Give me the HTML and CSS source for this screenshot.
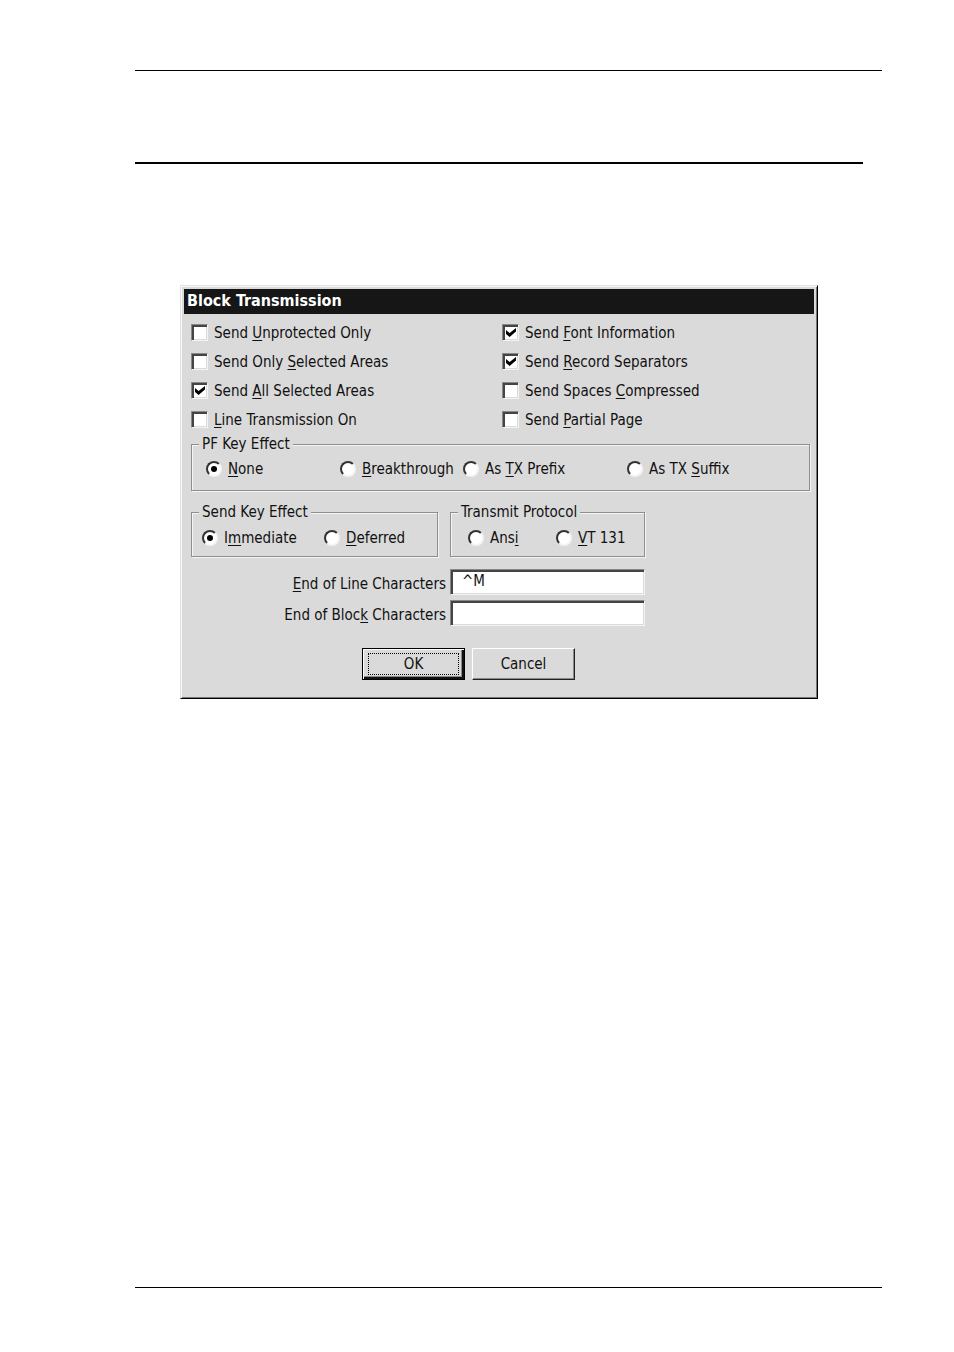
FILE: index.html
```html
<!DOCTYPE html>
<html lang="en">
<head>
    <meta charset="UTF-8">
    <meta name="viewport" content="width=device-width, initial-scale=1.0">
    <title>Block Transmission</title>
    <link rel="stylesheet" href="styles.css">
</head>
<body>
    <div class="page">
        <hr class="rule">
        <hr class="rule-thick">

        <form class="dialog">
            <h1 class="title">Block Transmission</h1>
            <div class="content">
                <div class="checks">
                    <label><input type="checkbox" name="unprotected"><span>Send <u>U</u>nprotected Only</span></label>
                    <label><input type="checkbox" name="font" checked><span>Send <u>F</u>ont Information</span></label>
                    <label><input type="checkbox" name="only_selected"><span>Send Only <u>S</u>elected Areas</span></label>
                    <label><input type="checkbox" name="record" checked><span>Send <u>R</u>ecord Separators</span></label>
                    <label><input type="checkbox" name="all_selected" checked><span>Send <u>A</u>ll Selected Areas</span></label>
                    <label><input type="checkbox" name="spaces"><span>Send Spaces <u>C</u>ompressed</span></label>
                    <label><input type="checkbox" name="line"><span><u>L</u>ine Transmission On</span></label>
                    <label><input type="checkbox" name="partial"><span>Send <u>P</u>artial Page</span></label>
                </div>

                <fieldset class="pf-key">
                    <legend>PF Key Effect</legend>
                    <div class="radios">
                        <label><input type="radio" name="pf" checked><span><u>N</u>one</span></label>
                        <label><input type="radio" name="pf"><span><u>B</u>reakthrough</span></label>
                        <label><input type="radio" name="pf"><span>As <u>T</u>X Prefix</span></label>
                        <label><input type="radio" name="pf"><span>As TX <u>S</u>uffix</span></label>
                    </div>
                </fieldset>

                <div class="groups">
                    <fieldset class="send-key">
                        <legend>Send Key Effect</legend>
                        <div class="radios">
                            <label><input type="radio" name="send" checked><span>I<u>m</u>mediate</span></label>
                            <label><input type="radio" name="send"><span><u>D</u>eferred</span></label>
                        </div>
                    </fieldset>
                    <fieldset class="protocol">
                        <legend>Transmit Protocol</legend>
                        <div class="radios">
                            <label><input type="radio" name="protocol"><span>Ans<u>i</u></span></label>
                            <label><input type="radio" name="protocol"><span><u>V</u>T 131</span></label>
                        </div>
                    </fieldset>
                </div>

                <div class="fields">
                    <label for="eol"><u>E</u>nd of Line Characters</label>
                    <input type="text" id="eol" value="^M">
                    <label for="eob">End of Bloc<u>k</u> Characters</label>
                    <input type="text" id="eob">
                </div>

                <div class="buttons">
                    <button type="submit" class="default"><span>OK</span></button>
                    <button type="button">Cancel</button>
                </div>
            </div>
        </form>

        <hr class="rule bottom">
    </div>
</body>
</html>
```

FILE: styles.css
```css
* {
    box-sizing: border-box;
}
body {
    margin: 0;
    background-color: #fff;
    color: #111;
    font-family: "DejaVu Sans Condensed", Tahoma, sans-serif;
    font-size: 15px;
    line-height: 20px;
}
.page {
    display: flex;
    flex-direction: column;
    min-height: 100vh;
    padding: 70px 72px 64px 135px;
}
hr {
    width: 100%;
    margin: 0;
    border: 0;
    background-color: #000;
}
.rule {
    height: 1px;
}
.rule-thick {
    width: auto;
    height: 2px;
    margin: 91px 19px 0 0;
}
.bottom {
    margin-top: auto;
}

/* dialog window */
.dialog {
    margin: 121px 64px 40px 45px;
    padding: 3px 3px 18px;
    border: 1px solid #000;
    border-top-color: #e2e2e2;
    border-left-color: #e2e2e2;
    background-color: #dadada;
    box-shadow: inset 1px 1px 0 #f8f8f8, inset -1px -1px 0 #777;
}
.title {
    margin: 0;
    padding: 0 3px 1px;
    background-color: #161616;
    color: #fff;
    font-size: 16px;
    line-height: 24px;
}
.content {
    padding: 4px 4px 0 7px;
}
u {
    text-underline-offset: 2px;
}
label {
    white-space: nowrap;
}

/* check boxes */
.checks {
    display: grid;
    grid-template-columns: 1fr 1fr;
    grid-auto-rows: 29px;
    column-gap: 3px;
}
.checks label {
    display: flex;
    align-items: center;
    gap: 6px;
}
input {
    margin: 0;
    appearance: none;
    background-color: #fff;
}
input[type="checkbox"] {
    width: 17px;
    height: 17px;
    border: 1px solid #f4f4f4;
    border-top-color: #888;
    border-left-color: #888;
    box-shadow: inset 1px 1px 0 1px #444, inset -1px -1px 0 #dadada;
}
input[type="checkbox"]:checked::before {
    content: "";
    display: block;
    width: 10px;
    height: 9px;
    margin: 3px;
    background-color: #000;
    clip-path: polygon(0 22%, 36% 56%, 100% 0, 100% 38%, 36% 100%, 0 66%);
}

/* radio groups */
fieldset {
    min-width: 0;
    margin: 0;
    padding: 0;
    border: 1px solid #8e8e8e;
    box-shadow: 1px 1px 0 #f4f4f4, inset 1px 1px 0 #f4f4f4;
}
legend {
    margin-left: 7px;
    padding: 0 3px;
    background-color: #dadada;
}
.radios {
    display: grid;
}
.radios label {
    display: flex;
    align-items: center;
    gap: 6px;
}
input[type="radio"] {
    width: 16px;
    height: 16px;
    border: 2px solid #f4f4f4;
    border-top-color: #333;
    border-left-color: #333;
    border-radius: 50%;
}
input[type="radio"]:checked::before {
    content: "";
    display: block;
    width: 6px;
    height: 6px;
    margin: 3px;
    border-radius: 50%;
    background-color: #000;
}
.pf-key .radios {
    grid-template-columns: 134px 123px 164px 1fr;
    padding: 5px 0 11px 14px;
}
.groups {
    display: flex;
    gap: 12px;
    margin-top: 11px;
}
.send-key {
    width: 247px;
}
.send-key .radios {
    grid-template-columns: 122px 1fr;
    padding: 6px 0 8px 10px;
}
.protocol {
    width: 195px;
}
.protocol .radios {
    grid-template-columns: 88px 1fr;
    padding: 6px 0 8px 17px;
}

/* text boxes */
.fields {
    display: grid;
    grid-template-columns: 255px 195px;
    gap: 5px 4px;
    margin-top: 12px;
}
.fields label {
    padding-top: 5px;
    text-align: right;
}
.fields input {
    width: 100%;
    height: 26px;
    padding: 0 11px 2px;
    border: 1px solid #f4f4f4;
    border-top-color: #888;
    border-left-color: #888;
    box-shadow: inset 1px 1px 0 1px #444, inset -1px -1px 0 #dadada;
    color: #111;
    font: inherit;
}

/* push buttons */
.buttons {
    display: flex;
    gap: 7px;
    margin: 22px 0 0 171px;
}
button {
    width: 103px;
    height: 32px;
    padding: 0;
    border: 1px solid #222;
    border-top-color: #fff;
    border-left-color: #fff;
    background-color: #dadada;
    box-shadow: inset -1px -1px 0 #888;
    color: #111;
    font: inherit;
}
.default {
    padding: 3px;
    border: 1px solid #000;
    box-shadow: inset 1px 1px 0 #fff, inset -2px -2px 0 #111, inset -3px -3px 0 #888;
}
.default span {
    display: block;
    margin: 1px 2px 2px;
    border: 1px dotted #000;
}
```
